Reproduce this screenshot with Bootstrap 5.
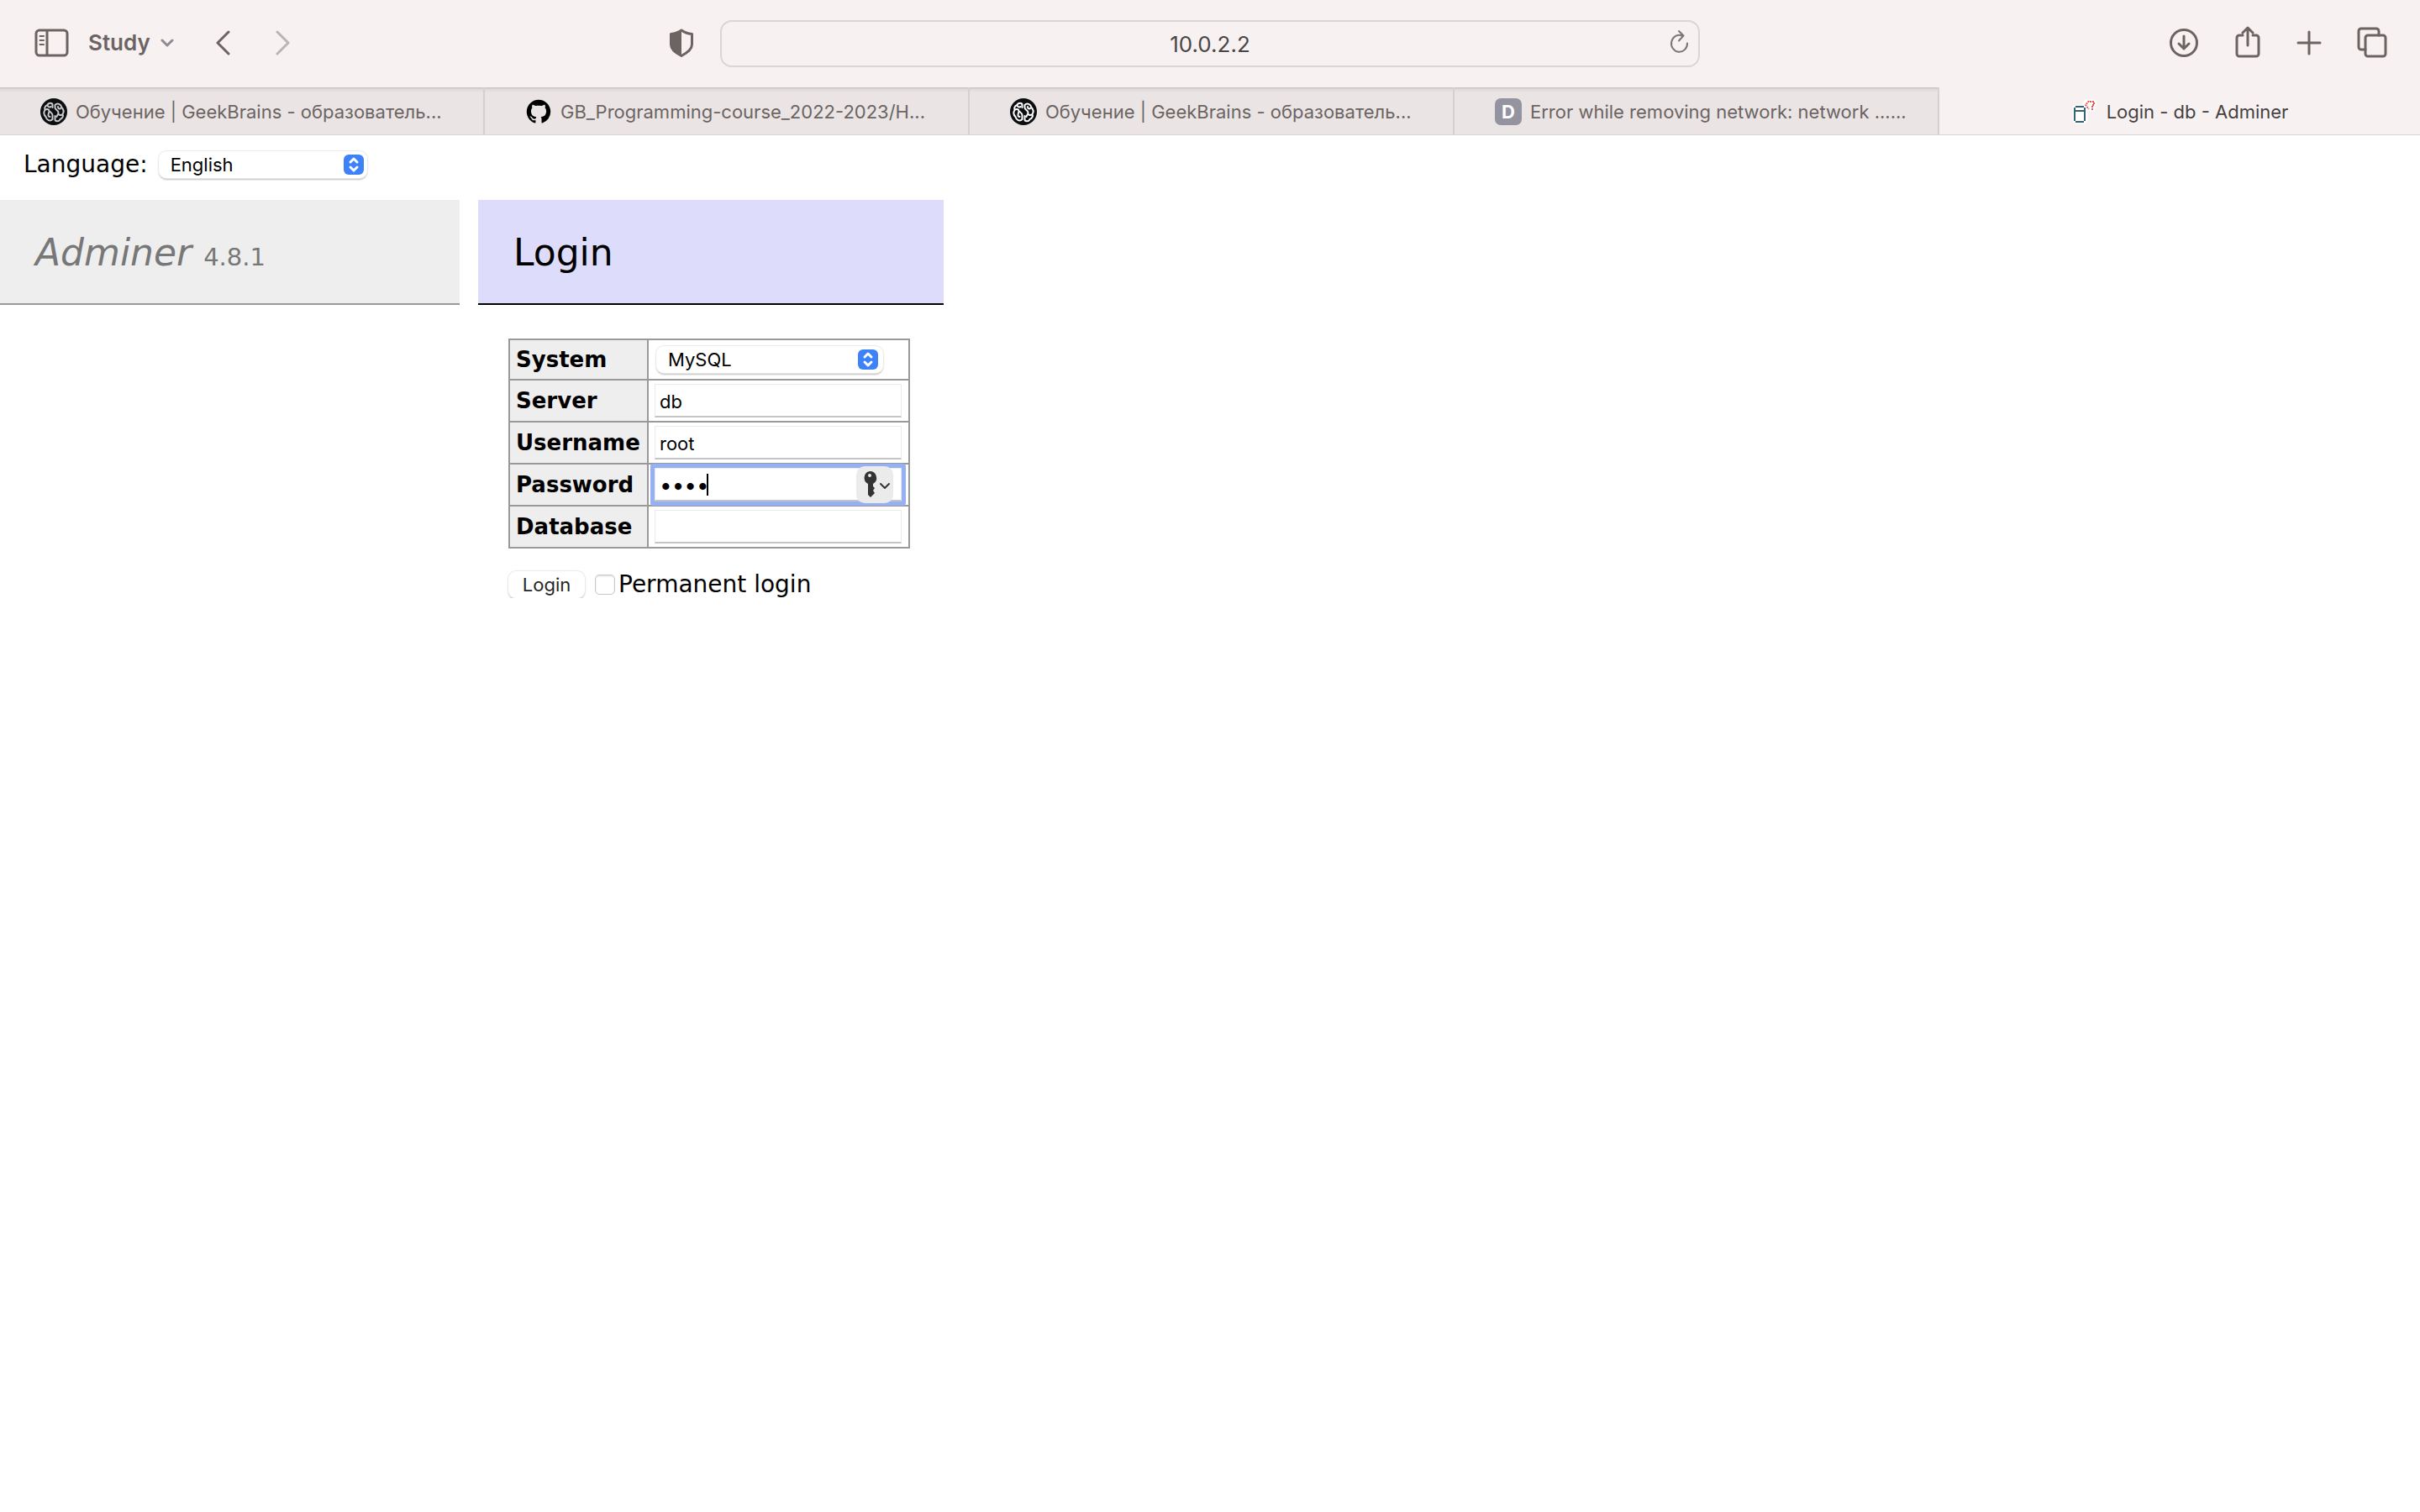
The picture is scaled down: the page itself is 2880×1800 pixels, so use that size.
<!DOCTYPE html>
<html lang="en">
<head>
<meta charset="utf-8">
<meta name="viewport" content="width=device-width, initial-scale=1">
<title>Login - db - Adminer</title>
<link href="https://cdn.jsdelivr.net/npm/bootstrap@5.3.0/dist/css/bootstrap.min.css" rel="stylesheet">
<style>
  body { font-family: "DejaVu Sans", sans-serif; font-size: 28px; line-height: 32px; color: #000; background: #fff; }
  svg { display: block; flex: none; fill: none; stroke: #6b6463; stroke-width: 3; stroke-linecap: round; stroke-linejoin: round; }
  .browser { font-family: Inter, sans-serif; color: #6b6463; background: #f7f1f1; }
  .toolbar { display: grid; grid-template-columns: 1fr 1166px 1fr; height: 104px; align-items: center; padding-bottom: 2px; }
  .tool { padding: 0; border: 0; background: none; color: inherit; }
  .left-tools { padding-left: 40px; }
  .right-tools { padding-right: 39px; gap: 42px; }
  .profile { font-size: 26px; font-weight: 600; gap: 12px; margin: 0 49px 0 23px; }
  .history { gap: 54px; }
  .shield { margin: 0 0 0 -62px; padding-right: 30px; }
  .url { height: 56px; border: 2px solid #dbd6d5; border-radius: 14px; background: #f7f1f1; color: #4a4645; font-size: 26px; text-align: center; padding: 0; }
  .url-wrap { padding-top: 2px; }
  .reload { right: 10px; top: 12px; }
  .tabs { display: grid; grid-template-columns: repeat(4, 577fr) 572fr; border-bottom: 1px solid #d8d4d4; font-size: 22px; }
  .tab { height: 56px; padding: 2px 0 0 48px; gap: 10px; color: #6b6463; background: linear-gradient(#c4bebe, #ded8d8 2px, #eae4e4 6px); border-right: 2px solid #d6d0d0; text-decoration: none; white-space: nowrap; overflow: hidden; }
  .tab-on { color: #464141; background: none; border: 0; padding: 2px 0 0; justify-content: center; }
  .letter { width: 32px; height: 32px; border-radius: 7px; background: #9494a0; color: #fff; font-weight: 700; line-height: 32px; text-align: center; }
  .lang { padding: 19px 28px 26px; gap: 13px; }
  .pick { position: relative; display: flex; }
  .pick select { appearance: none; height: 32px; border: 0; border-radius: 9px; padding: 0 14px; background: #fff; color: #000; font: 22px/32px Inter, sans-serif; box-shadow: 0 0 1px 1px #e9e9e9, 0 2px 2px #bbb; }
  .pick svg { position: absolute; right: 4px; top: 4px; pointer-events: none; }
  .lang select { width: 248px; }
  .pick-cell { padding-left: 2px; }
  .pick-cell select { width: 270px; }
  .side { width: 547px; }
  .panels { gap: 22px; }
  .bar { height: 125px; border-bottom: 2px solid #000; background: #ddddfb; font-size: 44px; font-weight: 400; line-height: 52px; padding: 37px 42px 0; margin: 0; color: #000; }
  .bar-side { background: #eee; border-color: #999; color: #777; }
  .bar-side a { color: inherit; font-style: italic; text-decoration: none; }
  .version { font-size: 29px; }
  .login-form { padding: 40px 40px 0 36px; }
  .login-table { border-collapse: collapse; }
  .login-table th, .login-table td { border: 2px solid #999; height: 50px; }
  .login-table tr:first-child th, .login-table tr:first-child td { height: 48px; }
  .login-table th { width: 165px; padding: 0 7px; background: #eee; font-size: 26px; }
  .login-table td { padding: 0 8px 0 7px; }
  .field { display: block; width: 294px; height: 40px; border: 1px solid #ebebeb; border-bottom: 2px solid #c4c4c4; border-radius: 0; padding: 2px 5px 0; background: #fff; color: #000; font: 22px/32px Inter, sans-serif; outline: 0; }
  .field-on { box-shadow: 0 0 0 5px #96b0f4; border-radius: 1px; }
  .field[type=password] { font-size: 26px; }
  .caret { left: 62px; top: 7px; width: 2px; height: 26px; background: #000; }
  .keys { right: 10px; top: -2px; width: 44px; height: 44px; border: 0; padding: 0; border-radius: 10px; background: #ebebeb; }
  .actions { margin-top: 27px; gap: 12px; }
  .go { width: 91px; height: 32px; border: 0; border-radius: 9px; padding: 0; background: #fff; color: #262626; font: 22px/32px Inter, sans-serif; box-shadow: 0 0 1px 1px #e9e9e9, 0 2px 2px #bbb; }
  .tick { appearance: none; width: 24px; height: 24px; margin: 0; border: 1px solid #c8c8c8; border-radius: 5px; background: #fff; box-shadow: inset 0 1px 2px #ddd; }
</style>
<script src="https://cdn.jsdelivr.net/npm/bootstrap@5.3.0/dist/js/bootstrap.bundle.min.js"></script>
</head>
<body>
<svg class="d-none">
  <symbol id="brain" viewBox="0 0 32 32">
    <circle cx="16" cy="16" r="16" fill="#0c0e12" stroke="none"/>
    <path d="M14.500 11V8c0-3-5-3-6 0-3 1-4 4-3 6-2 3-1 6 1 8 1 4 5 6 8 3v-5c0-2-2-3-3-4M8.500 8c0 2 2 3 4 2M5.500 14c2-2 5-1 5 1s-1 3-1 5 2 2 2 2M17.500 21v4c0 3 5 3 6 0 3-1 4-4 3-6 2-3 1-6-1-8-1-4-5-6-8-3v3c0 3 4 3 4 6s-2 3-2 5M26.500 19c-2 2-5 1-5-1M24 12c-2 1-3 0-3-2"/>
  </symbol>
  <symbol id="updown" viewBox="0 0 24 24">
    <rect width="24" height="24" rx="6" fill="#3d82f7" stroke="none"/>
    <path d="M8 9l4-4 4 4M8 15l4 4 4-4"/>
  </symbol>
</svg>
<header class="browser">
  <div class="toolbar">
    <div class="left-tools d-flex align-items-center">
      <button class="tool" aria-label="Sidebar"><svg width="42" height="36" viewBox="0 0 42 36"><rect x="3" y="3" width="37" height="30" rx="4"/><path d="M16 4v28"/><path stroke-width="2" d="M7.500 10h4.500M7.500 15h4.500M7.500 20h4.500"/></svg></button>
      <button class="tool profile d-flex align-items-center">Study <svg width="16" height="12" viewBox="0 0 16 12" style="stroke:#8f8a92"><path d="M2 3l6 6 6-6"/></svg></button>
      <div class="history d-flex">
        <button class="tool" aria-label="Back"><svg width="18" height="32" viewBox="0 0 18 32"><path d="M16 3L3 16l13 13"/></svg></button>
        <button class="tool" aria-label="Forward"><svg width="18" height="32" viewBox="0 0 18 32" style="stroke:#bab5b4"><path d="M2 3l13 13L2 29"/></svg></button>
      </div>
    </div>
    <div class="d-flex align-items-center">
      <button class="tool shield" aria-label="Privacy report"><svg width="32" height="36" viewBox="0 0 32 36"><path d="M16 3c4 3 8 4 12.500 4.500V20c0 6-6 10-12.500 13.500C9 30 3.500 26 3.500 20V7.500C8 7 12 6 16 3z"/><path fill="#6b6463" stroke="none" d="M16 3v30.500C9 30 3.500 26 3.500 20V7.500z"/></svg></button>
      <div class="url-wrap position-relative flex-fill d-flex">
        <input class="url w-100" aria-label="Address" value="10.0.2.2">
        <button class="tool reload position-absolute" aria-label="Reload"><svg width="28" height="34" viewBox="0 0 28 34" style="stroke:#7b7675;stroke-width:2"><path d="M23 17.500A9.500 10 0 1 1 17 8.500M13 3l5.500 5.500-5.500 6"/></svg></button>
      </div>
    </div>
    <div class="right-tools d-flex align-items-center justify-content-end">
      <button class="tool" aria-label="Downloads"><svg width="36" height="40" viewBox="0 0 36 40"><circle cx="18" cy="20" r="15.500"/><path d="M18 12v15M12 21l6 6 6-6"/></svg></button>
      <button class="tool" aria-label="Share"><svg width="32" height="40" viewBox="0 0 32 40"><path d="M10 11H6a3 3 0 0 0-3 3v19a3 3 0 0 0 3 3h20a3 3 0 0 0 3-3V14a3 3 0 0 0-3-3h-4M16 23V2M10 8l6-6 6 6"/></svg></button>
      <button class="tool" aria-label="New tab"><svg width="30" height="40" viewBox="0 0 30 40"><path d="M15 7v26M2 20h26"/></svg></button>
      <button class="tool" aria-label="Show all tabs"><svg width="36" height="40" viewBox="0 0 36 40"><rect x="10" y="11" width="24" height="25" rx="3"/><path d="M10 28H5a3 3 0 0 1-3-3V6a3 3 0 0 1 3-3h18a3 3 0 0 1 3 3v5"/></svg></button>
    </div>
  </div>
  <nav class="tabs">
    <a href="#" class="tab d-flex align-items-center"><svg width="32" height="32" style="stroke:#c9c9ca;stroke-width:2"><use href="#brain"/></svg>Обучение | GeekBrains - образователь...</a>
    <a href="#" class="tab d-flex align-items-center"><svg width="32" height="32" viewBox="-1 -1 18 18"><path fill="#000" stroke="none" d="M8 0C3.580 0 0 3.580 0 8c0 3.540 2.290 6.530 5.470 7.590.4.070.55-.17.55-.38 0-.19-.01-.82-.01-1.490-2.010.37-2.530-.49-2.690-.94-.09-.23-.48-.94-.82-1.130-.28-.15-.68-.52-.01-.53.63-.01 1.080.58 1.230.82.72 1.210 1.870.87 2.330.66.070-.52.28-.87.51-1.070-1.780-.2-3.640-.89-3.640-3.950 0-.87.31-1.590.82-2.150-.08-.2-.36-1.020.08-2.120 0 0 .67-.21 2.200.82.64-.18 1.320-.27 2-.27s1.360.09 2 .27c1.530-1.040 2.200-.82 2.200-.82.44 1.100.16 1.920.08 2.120.51.56.82 1.270.82 2.150 0 3.070-1.870 3.750-3.650 3.950.29.25.54.73.54 1.480 0 1.070-.01 1.930-.01 2.200 0 .21.15.46.55.38A8 8 0 0 0 16 8c0-4.420-3.580-8-8-8z"/></svg>GB_Programming-course_2022-2023/H...</a>
    <a href="#" class="tab d-flex align-items-center"><svg width="32" height="32" style="stroke:#fff;stroke-width:2"><use href="#brain"/></svg>Обучение | GeekBrains - образователь...</a>
    <a href="#" class="tab d-flex align-items-center"><span class="letter">D</span>Error while removing network: network ......</a>
    <a href="#" class="tab tab-on d-flex align-items-center" aria-current="page"><svg width="32" height="32" viewBox="0 0 32 32"><path fill="#fff" stroke="#fff" d="M5 9h9l3-6h9l3 2v4l-3 5h-8v12l-2 3H5l-2-3V11z"/><path stroke="#346373" stroke-width="2" stroke-linecap="butt" d="M5 10h10M5 15h10M4 11v16M16 11v16M5 28h10"/><path stroke="#e8564e" stroke-width="2" stroke-linecap="butt" stroke-dasharray="2 1" d="M21 3l-4 5 4 5M22 4h5v4h-2v3M25 12v2"/></svg>Login - db - Adminer</a>
  </nav>
</header>

<div class="lang d-flex align-items-center">
  <label for="lang">Language:</label>
  <div class="pick"><select id="lang"><option>English</option></select><svg width="24" height="24" style="stroke:#fff"><use href="#updown"/></svg></div>
</div>
<div class="panels d-flex align-items-start">
  <aside class="side"><h1 class="bar bar-side"><a href="#">Adminer</a> <span class="version">4.8.1</span></h1></aside>
  <main>
    <h2 class="bar">Login</h2>
    <form class="login-form">
      <table class="login-table">
        <tr><th><label for="system">System</label></th><td><div class="pick pick-cell"><select id="system"><option>MySQL</option></select><svg class="me-4" width="24" height="24" style="stroke:#fff"><use href="#updown"/></svg></div></td></tr>
        <tr><th><label for="server">Server</label></th><td><input class="field" id="server" value="db"></td></tr>
        <tr><th><label for="user">Username</label></th><td><input class="field" id="user" value="root"></td></tr>
        <tr><th><label for="pass">Password</label></th><td><div class="position-relative"><input class="field field-on" type="password" id="pass" value="root"><span class="caret position-absolute"></span><button type="button" class="keys position-absolute" aria-label="Saved passwords"><svg width="44" height="44" viewBox="0 0 44 44"><path fill="#333" stroke="none" fill-rule="evenodd" d="M16 6a8 8 0 0 1 4 15v3l2 2-2 3 2 3-5 5-3-3V21a8 8 0 0 1 2-15zm0 3a2 2 0 1 0 0 4 2 2 0 0 0 0-4z"/><path stroke="#333" stroke-width="2" d="M29 21l5 5 5-5"/></svg></button></div></td></tr>
        <tr><th><label for="dbname">Database</label></th><td><input class="field" id="dbname"></td></tr>
      </table>
      <div class="actions d-flex align-items-center">
        <button type="button" class="go">Login</button>
        <div class="d-flex align-items-center gap-1"><input class="tick" type="checkbox" id="keep"><label for="keep">Permanent login</label></div>
      </div>
    </form>
  </main>
</div>
</body>
</html>
